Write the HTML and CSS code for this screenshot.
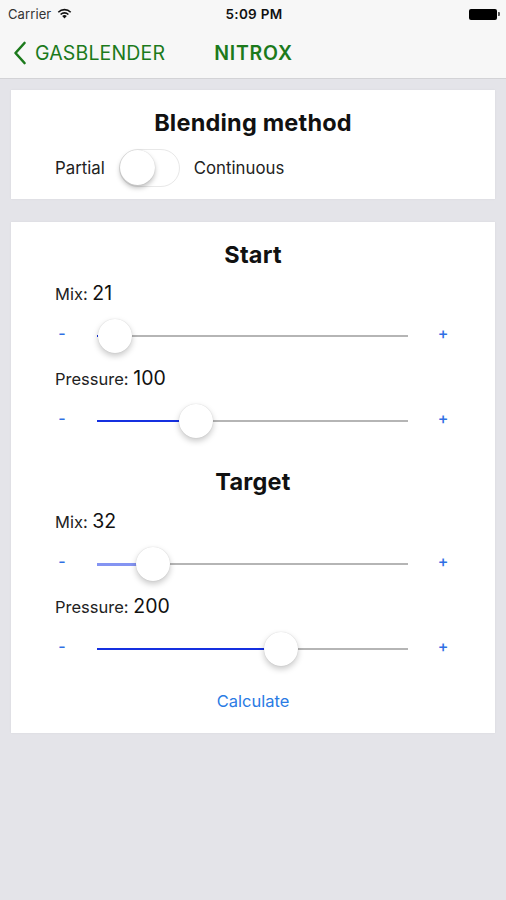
FILE: index.html
```html
<!DOCTYPE html>
<html>
<head>
<meta charset="utf-8">
<link rel="stylesheet" href="styles.css">
</head>
<body>
<div class="screen">
  <div class="statusbar">
    <div class="sb-left">
      <span class="carrier">Carrier</span>
      <svg class="wifi" width="15" height="11" viewBox="0 0 15 11">
        <path d="M7.5 10.5 L5.2 8.1 A3.3 3.3 0 0 1 9.8 8.1 Z" fill="#111"/>
        <path d="M3.6 6.5 A5.6 5.6 0 0 1 11.4 6.5" fill="none" stroke="#111" stroke-width="1.6"/>
        <path d="M1.3 4.2 A8.8 8.8 0 0 1 13.7 4.2" fill="none" stroke="#111" stroke-width="1.6"/>
      </svg>
    </div>
    <div class="time">5:09 PM</div>
    <div class="sb-right">
      <div class="battery"><div class="battery-body"></div><div class="battery-tip"></div></div>
    </div>
  </div>
  <div class="navbar">
    <div class="back">
      <svg class="chevron" width="14" height="24" viewBox="0 0 14 24">
        <path d="M11.5 2 L2.5 12 L11.5 22" fill="none" stroke="#1c7a1c" stroke-width="2.6" stroke-linecap="round" stroke-linejoin="round"/>
      </svg>
      <span class="back-label">GASBLENDER</span>
    </div>
    <div class="nav-title">NITROX</div>
  </div>
  <div class="content">
    <div class="card card-method">
      <h2 class="title">Blending method</h2>
      <div class="toggle-row">
        <span class="toggle-label">Partial</span>
        <div class="switch"><div class="switch-knob"></div></div>
        <span class="toggle-label">Continuous</span>
      </div>
    </div>
    <div class="card card-values">
      <h2 class="title">Start</h2>
      <div class="value-label">Mix: <span class="num">21</span></div>
      <div class="slider-row">
        <span class="step">-</span>
        <div class="track">
          <div class="fill" style="width:1px"></div>
          <div class="thumb" style="left:18px"></div>
        </div>
        <span class="step">+</span>
      </div>
      <div class="value-label">Pressure: <span class="num">100</span></div>
      <div class="slider-row">
        <span class="step">-</span>
        <div class="track">
          <div class="fill" style="width:99px"></div>
          <div class="thumb" style="left:99px"></div>
        </div>
        <span class="step">+</span>
      </div>
      <h2 class="title title-target">Target</h2>
      <div class="value-label">Mix: <span class="num">32</span></div>
      <div class="slider-row">
        <span class="step">-</span>
        <div class="track">
          <div class="fill fill-light" style="width:56px"></div>
          <div class="thumb" style="left:56px"></div>
        </div>
        <span class="step">+</span>
      </div>
      <div class="value-label">Pressure: <span class="num">200</span></div>
      <div class="slider-row">
        <span class="step">-</span>
        <div class="track">
          <div class="fill" style="width:184px"></div>
          <div class="thumb" style="left:184px"></div>
        </div>
        <span class="step">+</span>
      </div>
      <div class="calc">Calculate</div>
    </div>
  </div>
</div>
</body>
</html>
```
FILE: styles.css
```css
* { box-sizing: border-box; }
html, body { margin: 0; padding: 0; }
body {
  width: 506px;
  height: 900px;
  background: #e4e4e9;
  font-family: Inter, "Liberation Sans", sans-serif;
  color: #111;
}
.screen { display: flex; flex-direction: column; min-height: 900px; }

.statusbar {
  height: 28px;
  background: #f7f7f7;
  display: grid;
  grid-template-columns: 1fr auto 1fr;
  align-items: center;
  padding: 0 6px 0 8px;
}
.sb-left { display: flex; align-items: center; gap: 6px; }
.carrier { font-size: 13px; color: #333; letter-spacing: 0.1px; }
.wifi { margin-top: -1px; }
.time { font-size: 13.5px; font-weight: 600; color: #111; text-align: center; letter-spacing: 0.3px; }
.sb-right { display: flex; justify-content: flex-end; }
.battery { display: flex; align-items: center; }
.battery-body {
  width: 28px; height: 11px;
  background: #000;
  border-radius: 2px;
}
.battery-tip { width: 2px; height: 4px; background: #555; margin-left: 1px; border-radius: 0 1px 1px 0; }

.navbar {
  height: 51px;
  background: #f7f7f7;
  border-bottom: 1px solid #d3d3d6;
  display: flex;
  align-items: center;
  padding: 0 0 0 13px;
}
.back { display: flex; align-items: center; gap: 8px; color: #1c7a1c; }
.chevron { display: block; }
.back-label { font-size: 19.5px; letter-spacing: 0.15px; }
.nav-title { margin-left: 49px; font-size: 19.5px; font-weight: 600; color: #1c7a1c; letter-spacing: 0.8px; }

.content {
  padding: 11px 11px 0 11px;
  display: flex;
  flex-direction: column;
  gap: 23px;
}
.card {
  background: #fff;
  box-shadow: 0 0 2px rgba(0,0,0,0.06);
}
.card-method { padding: 20px 0 11px; height: 109px; }
.title {
  margin: 0;
  text-align: center;
  font-size: 23.5px;
  line-height: 26px;
  font-weight: 700;
  color: #111;
  letter-spacing: 0.2px;
}
.toggle-row {
  margin-top: 13px;
  display: flex;
  align-items: center;
  padding-left: 44px;
  gap: 14px;
}
.toggle-label { font-size: 16.8px; color: #222; }
.switch {
  width: 61px; height: 38px;
  border-radius: 19px;
  border: 1.5px solid #e8e8e8;
  background: #fff;
  position: relative;
}
.switch-knob {
  position: absolute;
  left: 0; top: 0;
  width: 35px; height: 35px;
  border-radius: 50%;
  background: #fff;
  box-shadow: 0 3px 5px rgba(0,0,0,0.25), 0 0 1px rgba(0,0,0,0.2);
}

.card-values { padding: 20px 0 24px; height: 511px; }
.value-label {
  margin-top: 14px;
  padding-left: 44px;
  font-size: 16.5px;
  line-height: 22px;
  color: #222;
}
.value-label .num { font-size: 19.5px; color: #111; }
.slider-row + .value-label { margin-top: 11px; }
.slider-row {
  margin-top: 11px;
  height: 40px;
  display: grid;
  grid-template-columns: 20px 1fr 20px;
  column-gap: 25px;
  align-items: center;
  padding: 0 42px 0 41px;
}
.step {
  text-align: center;
  color: #2f6fe4;
  font-size: 16px;
  font-weight: 500;
  margin-top: -6px;
}
.track {
  position: relative;
  height: 2px;
  background: #b5b5b5;
}
.fill {
  position: absolute;
  left: 0; top: 0;
  height: 2px;
  background: #1530e0;
}
.fill-light { background: #8494f2; height: 3px; top: -0.5px; }
.thumb {
  position: absolute;
  top: 1px;
  width: 34px; height: 34px;
  margin-left: -17px;
  margin-top: -17px;
  border-radius: 50%;
  background: #fff;
  box-shadow: 0 3px 6px rgba(0,0,0,0.22), 0 0 1px rgba(0,0,0,0.18);
}
.title-target { margin-top: 28px; }
.title-target + .value-label { margin-top: 15px; }
.calc {
  margin-top: 22px;
  text-align: center;
  font-size: 16.5px;
  line-height: 20px;
  color: #2a7be4;
}
```
